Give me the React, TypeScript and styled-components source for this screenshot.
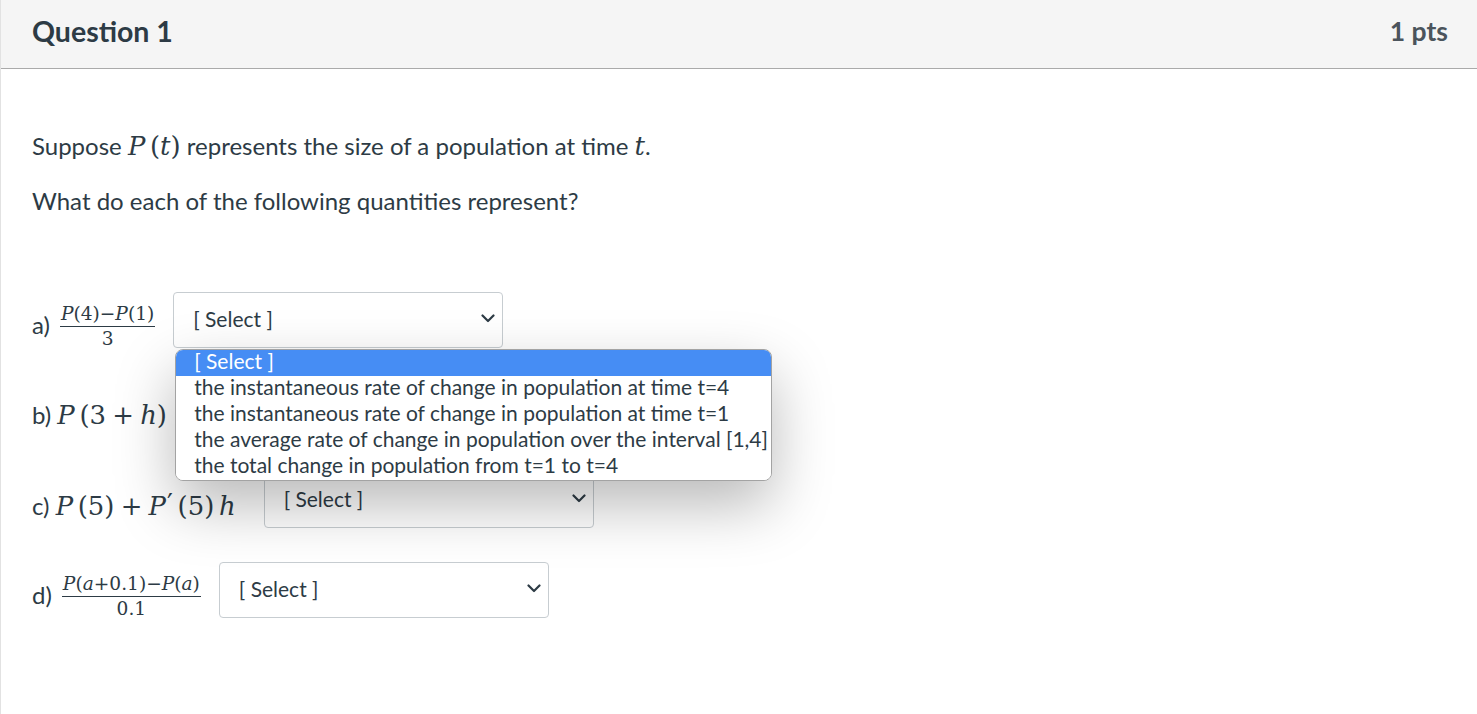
import React from "react";
import styled, { createGlobalStyle } from "styled-components";

const GlobalStyle = createGlobalStyle`
  body {
    margin: 0;
    background: #fff;
    font-family: Lato, "Noto Sans", sans-serif;
    color: #2d3b45;
  }
`;

const options = [
  "[ Select ]",
  "the instantaneous rate of change in population at time t=4",
  "the instantaneous rate of change in population at time t=1",
  "the average rate of change in population over the interval [1,4]",
  "the total change in population from t=1 to t=4",
];

const Chevron: React.FC = () => (
  <svg width="14" height="9" viewBox="0 0 14 9">
    <polyline
      points="1.5,1.5 7,7 12.5,1.5"
      fill="none"
      stroke="#2d3b45"
      strokeWidth="2.2"
      strokeLinecap="round"
      strokeLinejoin="round"
    />
  </svg>
);

const SelectBox: React.FC<{ open?: boolean }> = ({ open }) => (
  <SelectWrap>
    <SelectField>
      <span>[ Select ]</span>
      <Chevron />
    </SelectField>
    {open && (
      <Menu>
        {options.map((o, i) => (
          <Option key={o} active={i === 0}>
            {o}
          </Option>
        ))}
      </Menu>
    )}
  </SelectWrap>
);

export default function App() {
  return (
    <>
      <GlobalStyle />
      <Question>
        <Header>
          <Title>Question 1</Title>
          <Points>1 pts</Points>
        </Header>
        <Body>
          <Para>
            Suppose{" "}
            <M>
              <I>P</I>
              <Paren>(</Paren>
              <I>t</I>)
            </M>{" "}
            represents the size of a population at time <M><I>t</I></M>.
          </Para>
          <Para second>What do each of the following quantities represent?</Para>

          <Rows>
            <Row>
              <Label>a)</Label>
              <Frac>
                <Num>
                  <I>P</I>(4)−<I>P</I>(1)
                </Num>
                <Den>3</Den>
              </Frac>
              <Gap />
              <SelectBox open />
            </Row>
            <Row>
              <Label>
                b){" "}
                <M>
                  <I>P</I>
                  <Paren>(</Paren>3<Op>+</Op>
                  <I>h</I>)
                </M>
              </Label>
              <Gap />
              <SelectBox />
            </Row>
            <Row>
              <Label>
                c){" "}
                <M>
                  <I>P</I>
                  <Paren>(</Paren>5)<Op>+</Op>
                  <I>P</I>
                  <Prime>′</Prime>
                  <Paren>(</Paren>5)
                  <Paren>
                    <I>h</I>
                  </Paren>
                </M>
              </Label>
              <Gap />
              <SelectBox />
            </Row>
            <Row>
              <Label>d)</Label>
              <Frac>
                <Num>
                  <I>P</I>(<I>a</I>+0.1)−<I>P</I>(<I>a</I>)
                </Num>
                <Den>0.1</Den>
              </Frac>
              <Gap />
              <SelectBox />
            </Row>
          </Rows>
        </Body>
      </Question>
    </>
  );
}

const Question = styled.div`
  width: 1477px;
  height: 714px;
  overflow: hidden;
  box-sizing: border-box;
  border-left: 1px solid #e2e2e2;
`;

const Header = styled.header`
  height: 69px;
  box-sizing: border-box;
  background: #f5f5f5;
  border-bottom: 1px solid #aaaaaa;
  display: flex;
  align-items: center;
  justify-content: space-between;
  padding: 0 29px 6px 31px;
`;

const Title = styled.h2`
  margin: 0;
  font-size: 28.5px;
  font-weight: 700;
  color: #2d3b45;
`;

const Points = styled.div`
  font-size: 26.5px;
  font-weight: 700;
  color: #4b545c;
`;

const Body = styled.div`
  padding: 0 31px;
`;

const Para = styled.p<{ second?: boolean }>`
  margin: ${({ second }) => (second ? "21px 0 0" : "60px 0 0")};
  font-size: 24px;
  line-height: 33px;
`;

const M = styled.span`
  font-family: "DejaVu Serif", "Liberation Serif", serif;
  font-size: 1.08em;
  white-space: nowrap;
`;

const I = styled.i`
  font-style: italic;
`;

const Paren = styled.span`
  margin-left: 0.18em;
`;

const Op = styled.span`
  margin: 0 0.24em;
`;

const Prime = styled.span`
  vertical-align: 0.1em;
  margin-left: 0.04em;
`;

const Rows = styled.div`
  margin-top: 75px;
  display: flex;
  flex-direction: column;
  gap: 34px;
`;

const Row = styled.div`
  display: flex;
  align-items: center;
  height: 56px;
`;

const Label = styled.div`
  font-size: 24px;
  padding-top: 9px;
  margin-right: 10px;
`;

const Frac = styled.span`
  display: inline-flex;
  flex-direction: column;
  align-items: center;
  font-family: "DejaVu Serif", "Liberation Serif", serif;
  font-size: 18.6px;
  line-height: 20px;
  padding-top: 12px;
`;

const Num = styled.span`
  padding: 0 1px 2px;
  border-bottom: 1.5px solid #2d3b45;
  white-space: nowrap;
`;

const Den = styled.span`
  padding-top: 2px;
`;

const Gap = styled.span`
  width: 18px;
`;

const SelectWrap = styled.div`
  position: relative;
`;

const SelectField = styled.div`
  width: 330px;
  height: 56px;
  box-sizing: border-box;
  border: 1px solid #c7cdd1;
  border-radius: 4px;
  background: #fff;
  display: flex;
  align-items: center;
  justify-content: space-between;
  padding: 0 7px 3px 19px;
  font-size: 21px;
  color: #2d3b45;
`;

const Menu = styled.div`
  position: absolute;
  top: calc(100% + 1px);
  left: 2px;
  z-index: 10;
  background: #fff;
  border: 1px solid #a3a3a3;
  border-radius: 8px;
  overflow: hidden;
  box-shadow: 0 24px 60px rgba(0, 0, 0, 0.28);
`;

const Option = styled.div<{ active?: boolean }>`
  height: 26px;
  line-height: 22px;
  padding: 0 3px 0 18px;
  font-size: 21px;
  white-space: nowrap;
  background: ${({ active }) => (active ? "#468df4" : "#fff")};
  color: ${({ active }) => (active ? "#fff" : "#2d3b45")};
`;
